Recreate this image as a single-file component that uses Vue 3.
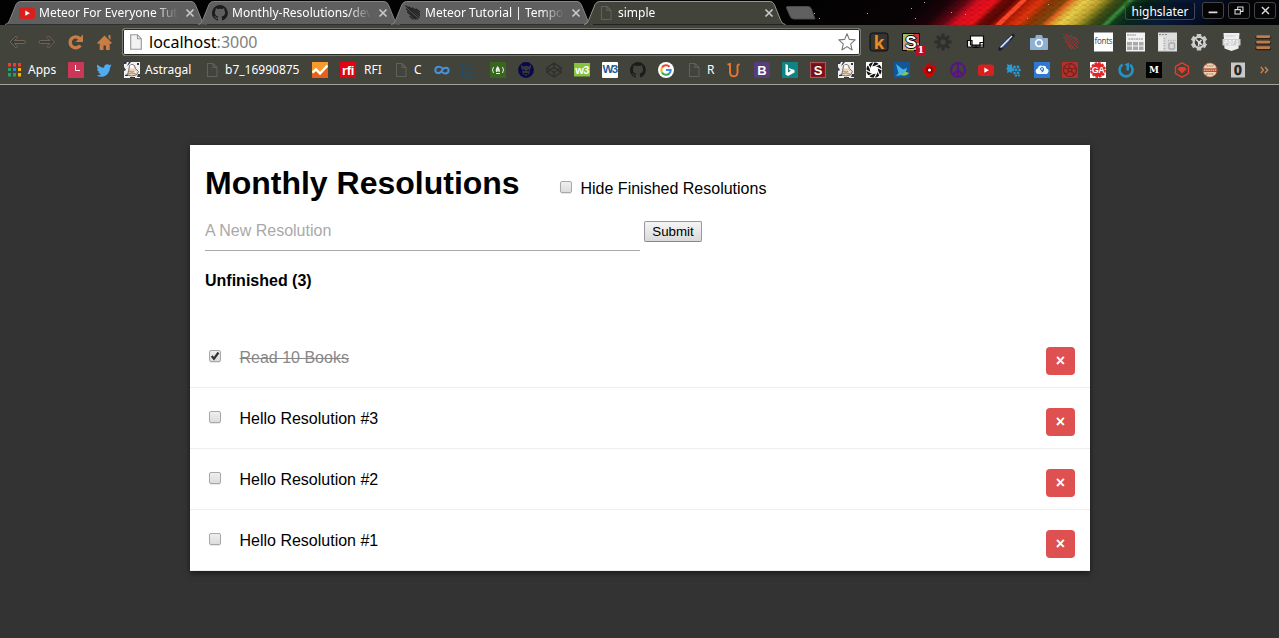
<script setup>
import { ref, computed } from 'vue'

const tabs = [
  { icon: 'youtube', title: 'Meteor For Everyone Tutorial' },
  { icon: 'github', title: 'Monthly-Resolutions/develop' },
  { icon: 'meteor-dark', title: 'Meteor Tutorial | Temporary' },
  { icon: 'page', title: 'simple', active: true },
]

const extensions = [
  'ext-k', 'ext-s', 'ext-gear', 'ext-screens', 'ext-pen', 'ext-camera', 'ext-meteor',
  'ext-fonts', 'ext-table', 'ext-ruler', 'ext-tools', 'ext-shield', 'ext-menu',
]

// Lettering that sits on top of an icon's background shape
const glyphs = {
  'ext-k': 'k',
  'ext-s': 'S',
  'ext-fonts': 'fonts',
  rfi: 'rfi',
  'w3-green': 'w3',
  'w3-blue': 'W3',
  bootstrap: 'B',
  's-red': 'S',
  ga: 'GA',
  medium: 'M',
  zero: '0',
}

const bookmarks = [
  { icon: 'apps', label: 'Apps', width: 61 },
  { icon: 'l-square' },
  { icon: 'twitter' },
  { icon: 'astragal', label: 'Astragal', width: 80 },
  { icon: 'page', label: 'b7_16990875', width: 108 },
  { icon: 'analytics' },
  { icon: 'rfi', label: 'RFI', width: 53, wide: true },
  { icon: 'page', label: 'C', width: 41 },
  { icon: 'infinity' },
  { icon: 'codecademy' },
  { icon: 'fcc' },
  { icon: 'ninja' },
  { icon: 'codepen' },
  { icon: 'w3-green' },
  { icon: 'w3-blue' },
  { icon: 'github' },
  { icon: 'google' },
  { icon: 'page', label: 'R', width: 40 },
  { icon: 'udemy' },
  { icon: 'bootstrap' },
  { icon: 'bing' },
  { icon: 's-red' },
  { icon: 'astragal' },
  { icon: 'aperture' },
  { icon: 'bird' },
  { icon: 'swirl' },
  { icon: 'peace' },
  { icon: 'youtube' },
  { icon: 'hexes' },
  { icon: 'cloud' },
  { icon: 'rose' },
  { icon: 'ga' },
  { icon: 'power' },
  { icon: 'medium' },
  { icon: 'gem' },
  { icon: 'cookie' },
  { icon: 'zero' },
]

const resolutions = ref([
  { text: 'Read 10 Books', done: true },
  { text: 'Hello Resolution #3', done: false },
  { text: 'Hello Resolution #2', done: false },
  { text: 'Hello Resolution #1', done: false },
])
const unfinished = computed(() => resolutions.value.filter((r) => !r.done).length)
</script>

<template>
  <div class="window">
    <svg class="defs" width="0" height="0">
      <symbol id="youtube" viewBox="0 0 16 16"><rect y="2.500" width="16" height="11.500" rx="2.500" fill="#d8201f" /><path d="M6.300 5.600v5.200l4.600-2.600z" fill="#fff" /></symbol>
      <symbol id="github" viewBox="0 0 16 16"><path fill="#1b1c1b" d="M8 0a8 8 0 0 0-2.500 15.600c.4.1.5-.2.5-.4v-1.500c-2.200.5-2.700-1-2.700-1-.4-.9-.9-1.200-.9-1.200-.7-.5.1-.5.1-.5.8.1 1.200.8 1.200.8.7 1.300 1.900.9 2.300.7.100-.5.300-.9.500-1.100-1.800-.2-3.600-.9-3.600-4 0-.9.300-1.600.8-2.100-.1-.2-.4-1 .1-2.100 0 0 .7-.2 2.200.8a7.500 7.500 0 0 1 4 0c1.500-1 2.200-.8 2.200-.8.4 1.100.2 1.900.1 2.100.5.600.8 1.300.8 2.100 0 3.100-1.900 3.700-3.700 3.900.3.300.6.800.6 1.500v2.300c0 .2.100.5.600.4A8 8 0 0 0 8 0z" /></symbol>
      <symbol id="meteor-dark" viewBox="0 0 16 16"><path d="M1 1l13 11.500M4 2l10.500 8.500M7.500 3l7 5.500M1.500 4l11 10M2.500 7l8 7M11 4l3.500 2.500M5 11.500l3 2.500" stroke="#222" stroke-width="1.250" stroke-linecap="round" /></symbol>
      <symbol id="page" viewBox="0 0 16 16"><path d="M3.500 1.500h5.500l4 4v9H3.500zM9 1.500v4h4" fill="none" stroke="#606158" stroke-width="1.100" /></symbol>
      <symbol id="apps" viewBox="0 0 16 16">
        <path d="M1 1h3v3.500H1zM6 1h3v3.500H6zM11 1h3v3.500h-3z" fill="#f23a36" />
        <path d="M1 6h3v3H1zM1 11h3v3.500H1zM6 11h3v3.500H6z" fill="#1fa463" />
        <path d="M6 6h3v3H6z" fill="#2d83ee" /><path d="M11 6h3v3h-3zM11 11h3v3.500h-3z" fill="#f6b400" />
      </symbol>
      <symbol id="l-square" viewBox="0 0 16 16"><path d="M0 0h16v16H0z" fill="#cd3656" /><path d="M7.500 3v5.500H12" fill="none" stroke="#fff" /></symbol>
      <symbol id="twitter" viewBox="0 0 16 16"><path fill="#50abf1" d="M15.500 3.800l-1.500 1.400C14 10.500 10.300 14.800 5.300 14.800A9 9 0 0 1 .5 13.500c1.700.2 3.400-.3 4.700-1.400A3.300 3.300 0 0 1 2.200 9.800h1.400A3.300 3.300 0 0 1 1 6.500l1.500.4A3.300 3.300 0 0 1 1.500 2.500C3 4.500 5.400 5.700 8 5.800a3.300 3.300 0 0 1 5.400-2.800l2-.7-1 1.700z" /></symbol>
      <symbol id="astragal" viewBox="0 0 16 16"><path d="M0 0h16v16H0z" fill="#f1f1f1" /><path d="M0 0h3L2 2H0zM5 0h2L5 2.500 3 4zM13 1h2v2h-2zM0 5l2 3-2 1zM1 13l3-1v2H1zM6 15h5v1H6zM14 12h2v3h-3z" fill="#34344c" /><path d="M5.500 3.500Q8 1 10.500 3.500l1 3 3 3-2 3.500-5 1-4-1 1-4z" fill="#e7d1b8" stroke="#5d5855" stroke-width=".8" /><path d="M4 9l4 1 4-1M3 12l5-1 4 1" stroke="#a68361" fill="none" stroke-width=".8" /><path d="M6.500 2.500l3 1 .5 3H6zM10 8l3 2-2 1z" fill="#fff" /></symbol>
      <symbol id="analytics" viewBox="0 0 16 16"><path d="M0 0h16v16H0z" fill="#f99a2c" /><path d="M0 12l4-4 4 4 8-9v13H0z" fill="#e8601a" /><path d="M.5 10.500l3.500-3 4 4 7.500-8" stroke="#fff" stroke-width="2.400" fill="none" /></symbol>
      <symbol id="rfi" viewBox="0 0 16 16"><path d="M0 0h16v16H0z" fill="#e00510" /></symbol>
      <symbol id="infinity" viewBox="0 0 16 16"><path d="M8.500 6.500C5 3.500 1.200 5 1.300 8.200S6 12.500 8 8.500s6.500-3.500 6.600-.3S11 12.500 7.800 10" fill="none" stroke="#4791d8" stroke-width="2" /></symbol>
      <symbol id="codecademy" viewBox="0 0 16 16"><path d="M.7 1.700h9v12.600H.7zM12 13.800h4" fill="none" stroke="#264c62" stroke-width="1.300" /><path d="M7.500 6q-4-1-4 2.200t4 2.300" fill="none" stroke="#264c62" stroke-width="1.400" /></symbol>
      <symbol id="fcc" viewBox="0 0 16 16"><path d="M0 0h16v16H0z" fill="#38661f" /><path d="M3.500 5q-2 3 0 6M12.500 5q2 3 0 6M6 11.500h4" fill="none" stroke="#eee" /><path d="M7.500 4q3 3 2.200 6H8.500L8 8l-.7 2H6Q5 7.500 7.500 4z" fill="#eee" /></symbol>
      <symbol id="ninja" viewBox="0 0 16 16"><circle cx="8" cy="8" r="7.900" fill="#08084a" /><path d="M3 2.500l2 2q3-1.500 6 0l2-2v3l-1.500 3v3L8 14l-3.500-2.500v-3L3 5.500z" fill="#37373a" /><path d="M5 7.500l2 .7v.8H5zM11 7.500l-2 .7v.8h2zM6 11h4v1.300H6z" fill="#08084a" /></symbol>
      <symbol id="codepen" viewBox="0 0 16 16"><path d="M8 1l7 4.500v5L8 15l-7-4.500v-5zM1 5.500l7 5 7-5M1 10.500l7-5 7 5M8 1v4.500M8 10.500V15" fill="none" stroke="#2d2e2a" stroke-width="1.200" /></symbol>
      <symbol id="w3-green" viewBox="0 0 16 16"><path d="M0 1h16v13.500H0z" fill="#88c23d" /></symbol>
      <symbol id="w3-blue" viewBox="0 0 16 16"><rect width="16" height="16" rx="1" fill="#fff" /></symbol>
      <symbol id="google" viewBox="0 0 16 16"><circle cx="8" cy="8" r="8" fill="#fff" /><g fill="none" stroke-width="2"><path d="M11.500 4.800A4.700 4.700 0 0 0 4 5.600" stroke="#ea4335" /><path d="M4 5.600a4.700 4.700 0 0 0 0 4.800" stroke="#fbbc05" /><path d="M4 10.400a4.700 4.700 0 0 0 7.500.8" stroke="#34a853" /><path d="M11.500 11.200A4.500 4.500 0 0 0 12.700 8H8" stroke="#4285f4" /></g></symbol>
      <symbol id="udemy" viewBox="0 0 16 16"><path d="M1.500 2.700L4 2v8q0 4.300 4 4.300 3.500 0 3.500-4.300V3.500l2-1.500" fill="none" stroke="#e9772a" stroke-width="1.900" /></symbol>
      <symbol id="bootstrap" viewBox="0 0 16 16"><rect width="16" height="16" rx="2" fill="#563d7c" /></symbol>
      <symbol id="bing" viewBox="0 0 16 16"><path d="M0 0h16v16H0z" fill="#0e8583" /><path d="M3.500 2l2.500 1v7.500l3-1.700-1.500-.8-1-2L12.500 8v2.500L6 14l-2.500-1.500z" fill="#fff" /></symbol>
      <symbol id="s-red" viewBox="0 0 16 16"><path d="M0 0h16v16H0z" fill="#8c151b" /><path d="M.500.500h15v15H.500z" fill="none" stroke="#cc9496" stroke-dasharray="1 1" /><path d="M2 2h12v12H2z" fill="#741116" /></symbol>
      <symbol id="aperture" viewBox="0 0 16 16"><path d="M0 0h16v16H0z" fill="#fff" /><circle cx="8" cy="8" r="5.900" fill="none" stroke="#111" stroke-width="3.600" /><path d="M8 0L5 5.500M14 2L8.500 4.500M16 8l-5.500-3M14 14l-2.500-5.500M8 16l3-5.500M2 14l5.500-2.500M0 8l5.500 3M2 2l2.500 5.500" stroke="#fff" stroke-width="1.100" /></symbol>
      <symbol id="bird" viewBox="0 0 16 16"><path d="M0 0h16v16H0z" fill="#13579a" /><path d="M2 2l7 5.500L13 6l-1.500 5L8 13l-6 1 2.500-3z" fill="#43b4e7" /><path d="M7.500 13.500Q10 8 15 11q-2 3-7.500 2.500z" fill="#8fc548" /></symbol>
      <symbol id="swirl" viewBox="0 0 16 16"><path d="M13.500 1Q5-1 3 5-1 4 1.500 11q2 3 4.500 3-1.500 1-3 .7 8 2 9.500-4.700 3.500-1 1-5-2-3-7-1.500 3-2.500 7-2.500z" fill="#c80707" /><circle cx="7.500" cy="8" r="3.400" fill="#8f0000" /><circle cx="7.500" cy="8" r="1.500" fill="#fff" /></symbol>
      <symbol id="peace" viewBox="0 0 16 16"><circle cx="8" cy="8" r="7" fill="none" stroke="#5a118a" stroke-width="1.900" /><path d="M8 1v14M8 8l-5 5M8 8l5 5" stroke="#5a118a" stroke-width="1.900" /></symbol>
      <symbol id="hexes" viewBox="0 0 16 16"><g fill="#279bd8"><path d="M1 2l2.500 1L6 2v3l2 2-2 1v3l-2.500-1L1 11l.500-3L0 6.500 1.500 5z" /><circle cx="8.500" cy="5" r="1.400" /><circle cx="12" cy="5" r="1.400" /><circle cx="7" cy="8" r="1.400" /><circle cx="10" cy="8" r="1.400" /><circle cx="13.500" cy="8" r="1.300" /><circle cx="8.500" cy="11" r="1.300" /><circle cx="12" cy="11" r="1.400" /><circle cx="10" cy="13.500" r="1.200" /><circle cx="13" cy="13.500" r="1.100" /></g></symbol>
      <symbol id="cloud" viewBox="0 0 16 16"><path d="M0 0h16v16H0z" fill="#2e7ad3" /><path d="M3.500 12a3 3 0 0 1 0-5.500Q5 2 9 4q3-1 3.500 2.500 4 1.500.5 5.500z" fill="#f6fafd" /><circle cx="8" cy="7" r="1.500" fill="none" stroke="#2372ce" /><path d="M9.500 7q0 3-2 3" fill="none" stroke="#2372ce" /></symbol>
      <symbol id="rose" viewBox="0 0 16 16"><path d="M0 0h16v16H0z" fill="#b4302a" /><g fill="none" stroke="#70241f" stroke-width="1.100"><circle cx="8" cy="8" r="6.500" /><circle cx="8" cy="8" r="1.800" /><path d="M8 6Q5 3 10 1.500M10 8q3-4 4.500 0M8 10q5-1 3 4M6 8q1 5-4 3M7 6Q2 8 2 4" /></g></symbol>
      <symbol id="ga" viewBox="0 0 16 16"><path d="M0 0h16v16H0z" fill="#fff" /><circle cx="8" cy="8" r="6.700" fill="#e02628" stroke="#e02628" stroke-width="2.400" stroke-dasharray="2.500 1" /></symbol>
      <symbol id="power" viewBox="0 0 16 16"><path d="M4.500 2.500A6.500 6.500 0 1 0 12 2.700" fill="none" stroke="#2494c8" stroke-width="2.600" /><path d="M6.500 2.500L11 .500v8H8.500V4z" fill="#2494c8" /></symbol>
      <symbol id="medium" viewBox="0 0 16 16"><path d="M0 0h16v16H0z" /></symbol>
      <symbol id="gem" viewBox="0 0 16 16"><path d="M8 .8l6.500 3.700v7L8 15.200l-6.500-3.700v-7z" fill="none" stroke="#e53b2f" stroke-width="1.400" /><path d="M5.500 5h5l2 2L8 11.500 3.500 7z" fill="#e53b2f" /></symbol>
      <symbol id="cookie" viewBox="0 0 16 16"><circle cx="8" cy="8" r="6.900" fill="#f1d8b6" stroke="#b5684d" stroke-width="1.300" stroke-dasharray="1 1" /><path d="M1 6.300h14v3.700H1z" fill="#b44f3d" /><path d="M2 8.200h12" stroke="#f1d8b6" stroke-dasharray="1.500 .7" /><path d="M4.500 4h7M4 12h8" stroke="#856347" stroke-width=".8" stroke-dasharray="2 .6" /></symbol>
      <symbol id="zero" viewBox="0 0 16 16"><path d="M1 .500h14v15H1z" fill="#c9c9c9" /></symbol>

      <symbol id="ext-k" viewBox="0 0 20 20"><rect x="1" y="1" width="18" height="18" rx="2.500" fill="#333332" stroke="#0d0d0d" /></symbol>
      <symbol id="ext-s" viewBox="0 0 20 20"><path d="M1.500 1.500h17v17h-17z" fill="#d3a08a" stroke="#050505" /><path d="M2 2h9v7H2z" fill="#a5bd62" /><path d="M12 2h6v9h-6z" fill="#c23a35" /><path d="M6 15h7v3.500H6z" fill="#eed51c" /></symbol>
      <symbol id="ext-gear" viewBox="0 0 20 20"><path d="M10 1.500v17M1.500 10h17M4 4l12 12M16 4L4 16" stroke="#2e2f2b" stroke-width="3" /><circle cx="10" cy="10" r="4.300" fill="#42433b" stroke="#2e2f2b" stroke-width="3.200" /></symbol>
      <symbol id="ext-screens" viewBox="0 0 20 20"><path d="M5.500 4h13v9h-13zM2.500 8.500h4.500v6.500H2.500zM15 10.500h3.500V15H15zM8 15.500h6M11 13v2" fill="#fff" stroke="#080808" stroke-width="1.200" /></symbol>
      <symbol id="ext-pen" viewBox="0 0 20 20"><path d="M3 17L16 3.500" stroke="#1c2030" stroke-width="3.600" stroke-linecap="round" /><path d="M5 15l7-7.500" stroke="#3c62c4" stroke-width="2.600" /><path d="M3.500 15.500L15 4" stroke="#e4e9f2" stroke-width="1.500" /></symbol>
      <symbol id="ext-camera" viewBox="0 0 20 20"><path d="M2 6h4l1-3h6l1 3h4q1 0 1 1v10q0 1-1 1H2q-1 0-1-1V7q0-1 1-1z" fill="#8fb0d3" /><circle cx="10" cy="11" r="3.300" fill="#86a9ce" stroke="#f4f8fc" stroke-width="1.800" /></symbol>
      <symbol id="ext-meteor" viewBox="0 0 20 20"><path d="M2 2l15 14M5 2l12 11M9 3l8.500 7.500M2.500 5l12 12M4 9l9 8M13 5l4.500 3.500M7 13.500l4 3.500" stroke="#c12e30" stroke-width="1" stroke-dasharray="2.500 .5" /></symbol>
      <symbol id="ext-fonts" viewBox="0 0 20 20"><path d="M1 .5h19v19H1z" fill="#fff" /></symbol>
      <symbol id="ext-table" viewBox="0 0 20 20"><path d="M1 .5h19v19H1z" fill="#f2f2f2" /><path d="M2 3h9M3.500 7h15" stroke="#909090" stroke-dasharray="2 .5" /><path d="M2 10h5v3.500H2zM8 10h5v3.500H8zM14 10h4.500v3.500H14zM2 14.500h5V18H2zM8 14.500h5V18H8zM14 14.500h4.500V18H14z" fill="#a9a9a9" /></symbol>
      <symbol id="ext-ruler" viewBox="0 0 20 20"><path d="M1 .5h19v19H1z" fill="#dcdcdc" /><path d="M2 2.500h9" stroke="#888" stroke-dasharray="2 1" /><path d="M7.500 6v13M11 8.500h8" stroke="#aaa" stroke-width="1.600" stroke-dasharray="1 1.500" /><path d="M2 5h4v13H2z" fill="#eaeaea" /><rect x="12" y="11" width="5.500" height="6" rx="1" fill="none" stroke="#aaa" stroke-width="1.500" /></symbol>
      <symbol id="ext-tools" viewBox="0 0 20 20"><path d="M10 2v16.500M3 5.800l14 8.400M17 5.800L3 14.200" stroke="#c8c8c8" stroke-width="4.500" /><circle cx="10" cy="10.200" r="6.500" fill="#cecece" /><circle cx="10" cy="10.200" r="4.200" fill="#3c3c3a" /><path d="M7 7.500l2.700 2.500v4M12.500 8l-2 2 2 3" stroke="#ddd" stroke-width="1.600" fill="none" /></symbol>
      <symbol id="ext-shield" viewBox="0 0 20 20"><path d="M2.500 1h16l-1 15.500-7 2.500-7-2.500z" fill="#eee" /><path d="M4 3h12l-4 2H5z" fill="#ddd" /><path d="M1.500 7h18v6.500h-18z" fill="#cfcfcf" /><path d="M4 12.500v-4h2v2H4M8 8.500v4h2v-4zM12 12.500v-4h2M15 9h2l-1 1.500 1 2h-2" fill="none" stroke="#f8f8f8" stroke-width=".9" /></symbol>
      <symbol id="ext-menu" viewBox="0 0 20 20"><path d="M4 5.500h12.500M4 11h12.500M4 16.500h12.500" stroke="#24241e" stroke-width="3.600" stroke-linecap="round" /><path d="M4.500 4.700h11.500M4.500 10.200h11.500M4.500 15.700h11.500" stroke="#c27a48" stroke-width="2.700" stroke-linecap="round" /></symbol>
    </svg>

    <header class="chrome">
      <div class="titlebar">
        <svg class="nebula" viewBox="0 0 479 25" width="479" height="25">
          <defs>
            <linearGradient id="spectrum" gradientUnits="userSpaceOnUse" x1="0" y1="0" x2="479" y2="0" gradientTransform="skewX(-46)">
              <stop offset="0" stop-color="#020202" /><stop offset=".26" stop-color="#080204" />
              <stop offset=".313" stop-color="#1b0309" /><stop offset=".35" stop-color="#620613" />
              <stop offset=".375" stop-color="#da0d20" /><stop offset=".41" stop-color="#ec1119" />
              <stop offset=".426" stop-color="#6c0a08" /><stop offset=".447" stop-color="#590704" />
              <stop offset=".459" stop-color="#a01008" /><stop offset=".463" stop-color="#ff4a28" />
              <stop offset=".472" stop-color="#ff4a28" /><stop offset=".476" stop-color="#ab1c06" />
              <stop offset=".505" stop-color="#e4360c" /><stop offset=".528" stop-color="#8a3505" />
              <stop offset=".555" stop-color="#80480b" /><stop offset=".564" stop-color="#de5a1c" />
              <stop offset=".58" stop-color="#e0a532" /><stop offset=".597" stop-color="#ead04c" />
              <stop offset=".626" stop-color="#c2a52f" /><stop offset=".64" stop-color="#8c8420" />
              <stop offset=".66" stop-color="#434f15" /><stop offset=".68" stop-color="#244616" />
              <stop offset=".69" stop-color="#3c9240" /><stop offset=".702" stop-color="#123d1d" />
              <stop offset=".73" stop-color="#08261a" /><stop offset=".79" stop-color="#081c38" />
              <stop offset=".85" stop-color="#071230" /><stop offset=".93" stop-color="#030407" />
            </linearGradient>
            <pattern id="mesh" width="8" height="5" patternUnits="userSpaceOnUse"><path d="M0 2.500l2-2h4l2 2-2 2H2z" fill="none" stroke="#000" stroke-opacity=".13" stroke-width=".7" /></pattern>
          </defs>
          <rect width="479" height="25" fill="url(#spectrum)" />
          <rect width="479" height="25" fill="url(#mesh)" />
          <path d="M14 13.500h1M19 18.500h1M67 13.500h1M111 8.500h1M124 2.500h1M115 18.500h1M151 12.500h1M165 14.500h1M227 18.500h1M248 4.500h1M275 12.500h1" stroke="#aaa" />
        </svg>
        <nav class="tabs">
          <div v-for="tab in tabs" :key="tab.title" class="tab" :class="{ active: tab.active }">
            <svg class="tab-shape" viewBox="0 0 204 25" width="204" height="25">
              <path class="tab-fill" d="M0 24.500q3 0 4.500-4L11 4.500q1.500-3 4.500-3H186q3 0 4.300 3l6.500 16q1.500 4 4.700 4z" />
              <path class="tab-edge" d="M0 24.500q3 0 4.500-4L11 4.500q1.500-3 4.500-3H186q3 0 4.300 3l6.500 16q1.500 4 4.700 4" />
            </svg>
            <svg class="ico"><use :href="'#' + tab.icon" /></svg>
            <span class="tab-title">{{ tab.title }}</span>
            <svg class="tab-close" viewBox="0 0 10 10" width="10" height="10"><path d="M1.500 1.500l7 7M8.500 1.500l-7 7" /></svg>
          </div>
          <svg class="new-tab" viewBox="0 0 32 14" width="32" height="14"><path d="M2.500.500H23q2.500 0 3.500 2.500l3.500 10H9q-3 0-4-3L1.500 2Q1 .500 2.500.500z" fill="#606060" stroke="#4a4a4a" /></svg>
        </nav>
        <div class="controls">
          <span class="user">highslater</span>
          <svg class="ctl" viewBox="0 0 22 17"><path d="M6 10.500h10" stroke-width="2" /></svg>
          <svg class="ctl" viewBox="0 0 22 17"><path d="M6.500 7.500h6v5h-6zM9.500 7V4.500h6v5H13" /></svg>
          <svg class="ctl" viewBox="0 0 22 17"><path d="M7.500 4.500l8 8M15.500 4.500l-8 8" stroke-width="1.600" /></svg>
        </div>
      </div>

      <div class="toolbar">
        <div class="nav-buttons">
          <svg viewBox="0 0 18 18" class="dim"><path d="M7 3L1 9l6 6 1.500-1.500L5.500 10.500H15q1.500 0 1.500-1.500T15 7.500H5.500l3-3z" /></svg>
          <svg viewBox="0 0 18 18" class="dim"><path d="M10.500 3l6 6-6 6L9 13.500l3-3H2.500Q1 10.500 1 9t1.500-1.500H12l-3-3z" /></svg>
          <svg viewBox="0 0 18 18"><path d="M13.300 12.300A5.500 5.500 0 1 1 12.600 5.500" fill="none" stroke="#c97d46" stroke-width="3.400" /><path d="M16 1.500v7.500H8.500z" fill="#c97d46" /></svg>
          <svg viewBox="0 0 18 18"><path d="M8.500 2.500L16 10l-1.500 1-.8-.8V17h-3.700v-4.500H7.500V17H3.700v-6.800L2.500 11 1 10z" fill="#c97d46" /><path d="M12.500 2h2v5l-2-2z" fill="#c97d46" /></svg>
        </div>
        <div class="omnibox">
          <svg class="url-page" viewBox="0 0 12 16" width="12" height="16"><path d="M.7.700h6.800l3.800 4v10.500H.7zM7.500.700v4h3.800" fill="#f2f2f2" stroke="#979797" stroke-width="1.100" /></svg>
          <span class="url">localhost<i>:3000</i></span>
          <svg class="star" viewBox="0 0 18 18" width="18" height="18"><path d="M9 .8l2.300 5.600 5.900.5-4.500 3.900 1.400 6.200L9 13.600 3.900 17l1.400-6.200L.8 6.900l5.900-.5z" fill="#fff" stroke="#777" stroke-width="1.100" stroke-linejoin="round" /></svg>
        </div>
        <div class="extensions">
          <span v-for="ext in extensions" :key="ext" class="ext">
            <svg><use :href="'#' + ext" /></svg>
            <b v-if="glyphs[ext]" class="glyph" :class="'g-' + ext">{{ glyphs[ext] }}</b>
            <b v-if="ext === 'ext-s'" class="badge">1</b>
          </span>
        </div>
      </div>

      <div class="bookmarks">
        <span v-for="(mark, i) in bookmarks" :key="i" class="mark" :class="{ wide: mark.wide }" :style="{ width: (mark.width || 28) + 'px' }">
          <span class="ico">
            <svg><use :href="'#' + mark.icon" /></svg>
            <b v-if="glyphs[mark.icon]" class="glyph" :class="'g-' + mark.icon">{{ glyphs[mark.icon] }}</b>
          </span>
          <span v-if="mark.label" class="label">{{ mark.label }}</span>
        </span>
        <svg class="more" viewBox="0 0 9 8" width="9" height="8"><path d="M.8 1L3.500 4 .8 7M5 1l2.700 3L5 7" /></svg>
      </div>
    </header>

    <main class="card">
      <div class="head">
        <h1>Monthly Resolutions</h1>
        <label class="hide"><span class="check"></span><span class="hide-text">Hide Finished Resolutions</span></label>
      </div>
      <form class="entry" @submit.prevent>
        <div class="field">A New Resolution</div>
        <button class="submit">Submit</button>
      </form>
      <div class="count">Unfinished ({{ unfinished }})</div>
      <ul>
        <li v-for="item in resolutions" :key="item.text" :class="{ done: item.done }">
          <span class="check">
            <svg v-if="item.done" viewBox="0 0 12 12" width="12" height="12"><path d="M2.700 6l2.300 2.700L9.500 2.500" /></svg>
          </span>
          <span class="text">{{ item.text }}</span>
          <button class="delete">×</button>
        </li>
      </ul>
    </main>
  </div>
</template>

<style>
body { background: #333; overflow: hidden; }
</style>

<style scoped>
.window { height: 638px; background: #333; font-family: "Liberation Sans", Arial, sans-serif; overflow: hidden; }
.defs { position: absolute; }
.chrome { height: 85px; box-sizing: border-box; background: #42433b; border-bottom: 1px solid #a3a39c; font-family: "Noto Sans", sans-serif; color: #fff; }
.titlebar { position: relative; display: flex; justify-content: space-between; height: 25px; background: #020202; }
.nebula { position: absolute; right: 0; top: 0; }
.tabs { position: relative; display: flex; padding-left: 7px; }
.tab { position: relative; display: flex; align-items: center; width: 193px; box-sizing: border-box; padding: 1px 5px 0 12px; font-size: 12px; }
.tab-shape { position: absolute; left: -2px; top: 0; }
.tab-fill { fill: #5f5f5f; }
.tab-edge { fill: none; stroke: #858585; }
.active .tab-fill { fill: #42433b; }
.active .tab-edge { stroke: #96968d; }
.ico { position: relative; width: 16px; height: 16px; flex: none; }
.ico svg { display: block; width: 16px; height: 16px; }
.tab-title { position: relative; margin-left: 4px; width: 138px; overflow: hidden; white-space: nowrap; line-height: 20px; -webkit-mask-image: linear-gradient(90deg, #000 84%, transparent 101%); mask-image: linear-gradient(90deg, #000 84%, transparent 101%); }
.tab-close { position: relative; margin-left: 8px; fill: none; stroke: #c8c8c8; stroke-width: 1.700; }
.new-tab { margin: 6px 0 0 6px; }
.controls { position: relative; display: flex; align-items: flex-start; gap: 4px; padding: 2px 3px 0 0; }
.user { width: 70px; height: 18px; margin-right: 3px; box-sizing: border-box; border: 1px solid #3c4a58; border-top-color: transparent; border-radius: 3px; font-size: 12px; line-height: 17px; text-align: center; background: rgba(0, 0, 0, .2); }
.ctl { width: 22px; height: 17px; box-sizing: border-box; border: 1px solid #444; border-radius: 3px; background: #050505; fill: none; stroke: #ddd; stroke-width: 1.200; }
.toolbar { display: flex; align-items: center; height: 34px; padding-left: 9px; }
.nav-buttons { display: flex; gap: 11px; width: 114px; flex: none; }
.nav-buttons svg { width: 18px; height: 18px; }
.dim path { fill: #3c3c36; stroke: #75695a; stroke-width: .9; }
.omnibox { display: flex; align-items: center; width: 739px; height: 28px; box-sizing: border-box; padding: 0 4px 0 7px; margin-left: -1px; background: #fff; border: 1px solid #777871; border-radius: 3px; color: #000; box-shadow: inset 0 0 0 1px #292a26; flex: none; }
.url { margin-left: 7px; font-size: 16px; line-height: 24px; }
.url i { font-style: normal; color: #808080; }
.star { margin-left: auto; }
.extensions { display: flex; gap: 12px; margin-left: 8px; }
.ext { position: relative; width: 20px; height: 20px; }
.ext svg { width: 20px; height: 20px; display: block; }
.glyph { position: absolute; inset: 0; display: flex; align-items: center; justify-content: center; font: bold 12px/1 "Liberation Sans", Arial, sans-serif; color: #fff; white-space: nowrap; }
.g-ext-k { font: bold 17px/1 "Open Sans", sans-serif; color: #ef8b1c; }
.g-ext-s { font-size: 17px; text-shadow: 1px 0 #000, -1px 0 #000, 0 1px #000, 0 -1px #000; }
.g-ext-fonts { left: 1px; bottom: 3px; font: 8px/1 "Noto Sans", sans-serif; letter-spacing: -.3px; color: #555; }
.g-rfi { font-size: 13px; letter-spacing: -.3px; }
.g-w3-green { font-size: 11px; letter-spacing: -.5px; }
.g-w3-blue { font-size: 11.500px; letter-spacing: -1.500px; color: #1a5da0; padding-right: 1px; }
.g-bootstrap { font-size: 13px; }
.g-s-red { font-size: 13px; }
.g-ga { font-size: 9px; letter-spacing: -.5px; }
.g-medium { font: bold 9px/1 "DejaVu Serif", serif; }
.g-zero { font-size: 14px; color: #262626; -webkit-text-stroke: .6px #262626; }
.badge { position: absolute; left: 15px; top: 13px; width: 10px; height: 11px; border-radius: 2px; background: #bb0d22; color: #fff; font: bold 9px/11px "DejaVu Serif", serif; text-align: center; }
.bookmarks { display: flex; align-items: center; height: 22px; padding-left: 7px; font-size: 12px; white-space: nowrap; }
.mark { display: flex; align-items: center; gap: 5px; flex: none; }
.wide { gap: 8px; }
.label { line-height: 16px; }
.more { margin-left: 2px; fill: none; stroke: #d88447; stroke-width: 1.300; }

.card { width: 900px; height: 426px; margin: 60px auto 0 190px; background: #fff; box-shadow: 0 2px 6px rgba(0, 0, 0, .55); color: #000; font-size: 16px; line-height: 18px; }
.head { display: flex; height: 66px; padding: 0 15px; }
h1 { width: 355px; margin: 19px 0 0; font-size: 32px; line-height: 38px; white-space: nowrap; }
.hide { display: flex; align-items: flex-start; margin-top: 35px; }
.check { display: block; width: 12px; height: 12px; box-sizing: border-box; border: 1px solid #a8a8a8; border-radius: 2px; background: linear-gradient(#efefef, #dcdcdc); box-shadow: 0 1px 1px rgba(0, 0, 0, .1); flex: none; }
.check svg { display: block; margin: -1px; fill: none; stroke: #333; stroke-width: 2.200; }
.hide .check { margin: 1px 8.500px 0 0; }
.entry { display: flex; align-items: flex-start; height: 40px; padding: 0 15px; }
.field { width: 435px; height: 40px; box-sizing: border-box; padding-top: 11px; border-bottom: 1px solid #aaa; color: #a9a9a9; }
.submit { width: 58px; height: 21px; margin: 10px 0 0 4px; padding: 0; border: 1px solid #989898; border-bottom-color: #888; border-radius: 2px; background: linear-gradient(#f5f5f5, #dadada); font: 13.333px "Liberation Sans", Arial, sans-serif; color: #000; }
.count { height: 76px; box-sizing: border-box; padding: 21px 15px 0; font-weight: bold; }
ul { margin: 0; padding: 0; list-style: none; }
li { display: flex; align-items: flex-start; height: 61px; box-sizing: border-box; padding: 20px 15px 0 19px; border-bottom: 1px solid #eee; }
li .check { margin-top: 3px; }
.text { margin: 2px 0 0 18.500px; }
.done .text { color: #888; text-decoration: line-through; }
.delete { width: 29px; height: 28px; margin-left: auto; padding: 0 0 1px; border: 0; border-radius: 4px; background: #df5050; color: #fff; font: bold 16px/27px "Liberation Sans", Arial, sans-serif; }
</style>
